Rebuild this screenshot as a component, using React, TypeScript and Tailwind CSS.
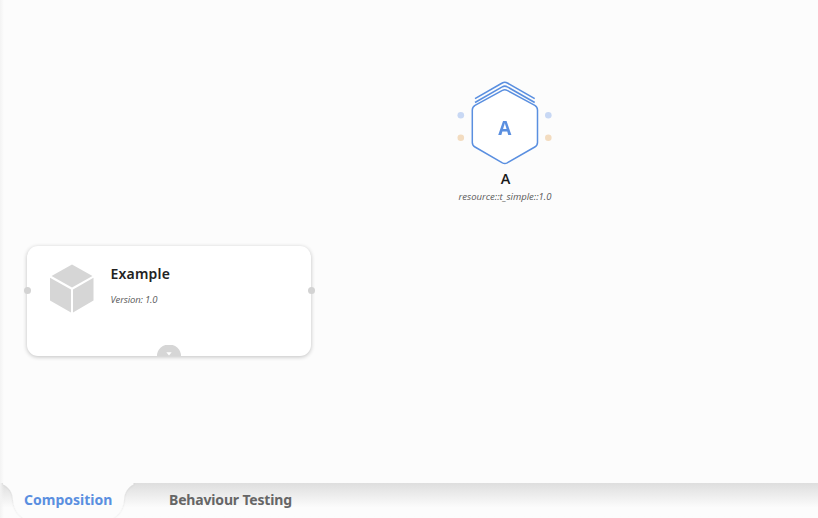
const port = "absolute size-[7px] rounded-full";

function ResourceNode() {
  return (
    <div className="absolute left-[445px] top-[76px] h-[130px] w-[120px] text-center">
      <svg className="absolute left-0 top-0" width="120" height="96" viewBox="445 76 120 96" fill="none">
        <path
          d="M502.4 90.4Q504.8 89 507.2 90.4L534.8 105.4Q537.5 107 537.5 110V142.5Q537.5 145.5 534.8 147L507.2 162.8Q504.8 164 502.4 162.8L475 147Q472.3 145.5 472.3 142.5V110Q472.3 107 475 105.4Z"
          fill="#fff"
          stroke="#5a8fe0"
          strokeWidth="1.5"
        />
        <path
          d="M475 98.6L502.2 83Q504.8 81.4 507.4 83L534.7 98.6M475 102.5L502.2 86.9Q504.8 85.3 507.4 86.9L534.7 102.5"
          stroke="#5a8fe0"
          strokeWidth="1.6"
        />
        <circle cx="460.8" cy="115.2" r="3.3" fill="#c8d8f4" />
        <circle cx="548.3" cy="115.2" r="3.3" fill="#c8d8f4" />
        <circle cx="460.8" cy="137.8" r="3.3" fill="#f3dcc0" />
        <circle cx="548.3" cy="137.8" r="3.3" fill="#f3dcc0" />
      </svg>
      <div className="relative pt-[40px] font-['Open_Sans',sans-serif] text-[20px] font-bold leading-[24px] text-[#5a8fe0]">
        <span className="inline-block scale-x-95">A</span>
      </div>
      <div className="mt-[30px] pl-px font-['Open_Sans',sans-serif] text-[14.5px] font-semibold leading-[18px] text-[#191919]">A</div>
      <div className="mt-[3px] whitespace-nowrap font-['Open_Sans',sans-serif] text-[9.5px] italic leading-[12px] text-[#5a5a5a]">
        resource::t_simple::1.0
      </div>
    </div>
  );
}

function ComponentCard() {
  return (
    <div className="absolute left-[27px] top-[246px] flex h-[110px] w-[284px] rounded-[11px] bg-white pl-[23px] pt-[18px] shadow-[0_1px_4px_rgba(0,0,0,0.24)]">
      <svg width="44" height="50" viewBox="0 0 44 50" fill="#d6d6d6">
        <path d="M22 .5L42.5 12L22 23.5L1.5 12Z" />
        <path d="M0 13.8L21 25.5V48.5L0 36.5Z" />
        <path d="M23 25.5L43.5 13.8V36.5L23 48.5Z" />
      </svg>
      <div className="ml-[16.5px] flex flex-col">
        <h2 className="font-['Noto_Sans',sans-serif] text-[14px] font-semibold leading-[20px] tracking-[0.2px] text-[#222]">Example</h2>
        <p className="mt-[10px] font-['Open_Sans',sans-serif] text-[9.5px] italic leading-[12px] tracking-[-0.15px] text-[#5a5a5a]">Version: 1.0</p>
      </div>
      <span className={`${port} -left-[3px] top-[41px] bg-[#d3d3d3]`} />
      <span className={`${port} -right-[3.5px] top-[41px] bg-[#d3d3d3]`} />
      <svg className="absolute bottom-0 left-[130px]" width="24" height="11" viewBox="0 0 24 11">
        <path d="M0 11A12 11.5 0 0 1 24 11Z" fill="#d6d6d6" />
        <path d="M9.3 7.2H14.7L12 10.4Z" fill="#fff" />
      </svg>
    </div>
  );
}

function TabBar() {
  return (
    <footer className="relative h-[35px] bg-linear-to-b from-[#dedede] to-[#fcfcfc] to-70%">
      <svg className="absolute left-0 top-0" width="160" height="35" viewBox="0 0 160 35" fill="none">
        <defs>
          <filter id="edge" x="-10%" y="-10%" width="120%" height="120%">
            <feDropShadow dx="0" dy="0" stdDeviation="1" floodColor="#000" floodOpacity="0.12" />
          </filter>
        </defs>
        <path
          d="M3 -4V1.5C9 4 13 10 13 17C14 26 18 33 27 37H109C119 33 123 26 124 17C124 10 128 4 133.5 1.5V-4Z"
          fill="#fcfcfc"
          filter="url(#edge)"
        />
      </svg>
      <nav className="relative flex h-[33px] items-center whitespace-nowrap pl-[24px] font-['Noto_Sans',sans-serif] text-[14px] font-bold leading-[20px]">
        <button className="w-[145px] text-left text-[#5a8fe0]">Composition</button>
        <button className="tracking-[-0.17px] text-[#666]">Behaviour Testing</button>
      </nav>
    </footer>
  );
}

export default function App() {
  return (
    <div className="relative flex h-[518px] w-[818px] flex-col overflow-hidden bg-[#fcfcfc]">
      <main className="relative flex-1">
        <ResourceNode />
        <ComponentCard />
      </main>
      <TabBar />
      <div className="absolute left-0 top-0 h-full w-1 bg-linear-to-r from-[#f3f3f3] to-transparent" />
    </div>
  );
}
